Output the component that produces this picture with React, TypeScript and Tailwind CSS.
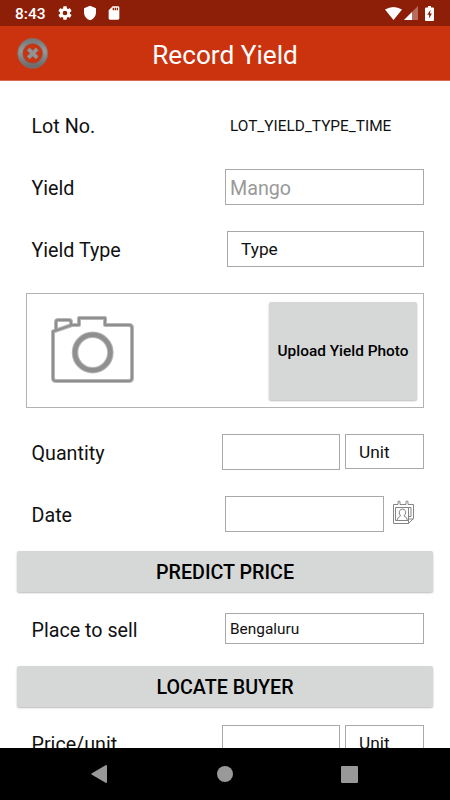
import React from 'react';

const field = 'border border-[#a9a9a9] bg-white flex items-center whitespace-nowrap';
const button =
  'flex items-center justify-center rounded-[2px] bg-[#d6d8d7] pt-[2px] font-medium text-black shadow-[0_1px_2px_rgba(0,0,0,0.28)] whitespace-nowrap';

function StatusBar() {
  return (
    <div className="flex h-[26px] items-center bg-[#8d1f09] pl-[15px] pr-4 text-white">
      <span className="w-[42px] text-[15.5px] font-medium leading-none pt-[3px]">8:43</span>
      <svg className="h-4 w-4" viewBox="0 0 24 24" fill="currentColor">
        <path d="M19.43 12.98c.04-.32.07-.64.07-.98s-.03-.66-.07-.98l2.11-1.65c.19-.15.24-.42.12-.64l-2-3.46c-.12-.22-.39-.3-.61-.22l-2.49 1c-.52-.4-1.08-.73-1.69-.98l-.38-2.65C14.46 2.18 14.25 2 14 2h-4c-.25 0-.46.18-.49.42l-.38 2.65c-.61.25-1.17.59-1.69.98l-2.49-1c-.23-.09-.49 0-.61.22l-2 3.46c-.13.22-.07.49.12.64l2.11 1.65c-.04.32-.07.65-.07.98s.03.66.07.98l-2.11 1.65c-.19.15-.24.42-.12.64l2 3.46c.12.22.39.3.61.22l2.49-1c.52.4 1.08.73 1.69.98l.38 2.65c.03.24.24.42.49.42h4c.25 0 .46-.18.49-.42l.38-2.65c.61-.25 1.17-.59 1.69-.98l2.49 1c.23.09.49 0 .61-.22l2-3.46c.12-.22.07-.49-.12-.64l-2.11-1.65zM12 15.5A3.5 3.5 0 1 1 12 8.5a3.5 3.5 0 0 1 0 7z" />
      </svg>
      <svg className="ml-[9px] h-4 w-4" viewBox="0 0 24 24" fill="currentColor">
        <path d="M12 1 3 5v6c0 5.55 3.84 10.74 9 12 5.16-1.26 9-6.45 9-12V5l-9-4z" />
      </svg>
      <svg className="ml-2 h-4 w-4" viewBox="0 0 24 24" fill="currentColor">
        <path d="M18 2h-8L4 8v12c0 1.1.9 2 2 2h12c1.1 0 2-.9 2-2V4c0-1.1-.9-2-2-2zm-6 6h-2V4h2v4zm3 0h-2V4h2v4zm3 0h-2V4h2v4z" />
      </svg>
      <svg className="ml-auto h-[13px] w-[17px]" viewBox="0 0 17 13" fill="currentColor">
        <path d="M0 2.6Q8.5-2.4 17 2.6L8.5 13z" />
      </svg>
      <svg className="ml-[2px] h-[14px] w-[14px]" viewBox="0 0 14 14" fill="currentColor">
        <path d="M0 14 14 0v14z" opacity=".35" />
        <path d="M0 14 8 6v8z" />
      </svg>
      <svg className="ml-[7px] h-[15px] w-[9px]" viewBox="0 0 9 15">
        <path d="M3 0h3v1.5h2q1 0 1 1V14q0 1-1 1H1q-1 0-1-1V2.5q0-1 1-1h2z" fill="currentColor" />
        <path d="M5.6 3.8 2.2 8.8h1.9v3.8l2.8-5H5z" fill="#8d1f09" />
      </svg>
    </div>
  );
}

function Toolbar() {
  return (
    <div className="grid h-[55px] grid-cols-[66px_1fr_66px] items-center border-b border-[#db6850] bg-[#cb330f]">
      <svg className="ml-[17px] h-8 w-8" viewBox="0 0 32 32">
        <defs>
          <linearGradient id="ring" x1="0" y1="0" x2="0" y2="1">
            <stop offset="0" stopColor="#7b7b7b" />
            <stop offset=".4" stopColor="#989898" />
            <stop offset="1" stopColor="#6c6c6c" />
          </linearGradient>
        </defs>
        <circle cx="15.7" cy="16.4" r="12.5" fill="none" stroke="url(#ring)" strokeWidth="5.2" />
        <circle cx="15.7" cy="16.4" r="14.9" fill="none" stroke="#7e6d68" strokeWidth=".8" />
        <circle cx="15.7" cy="16.4" r="9.9" fill="none" stroke="#70625e" strokeWidth=".6" />
        <path d="m11.3 12 8.800 8.800m0-8.800-8.800 8.800" stroke="#857571" strokeWidth="4.200" />
        <path d="m11.3 12 8.800 8.800m0-8.800-8.800 8.800" stroke="#929292" strokeWidth="3.400" />
      </svg>
      <h1 className="pt-[5px] text-center text-[26.2px] text-white whitespace-nowrap">Record Yield</h1>
    </div>
  );
}

function CameraIcon() {
  return (
    <svg className="mb-[4px] ml-[23px] h-[70px] w-[86px]" viewBox="0 0 86 70" fill="none">
      <g stroke="#b8b8b8" strokeWidth="4" strokeLinejoin="round">
        <path d="M3 17.5 22 11h7V4h26v7h24q3 0 3 3v50q0 3-3 3H6q-3 0-3-3z" />
        <path d="M6 16V8q0-2 2-2h11q2 0 2 2v3" />
        <circle cx="42.7" cy="38.5" r="17.7" strokeWidth="6.5" />
      </g>
      <g stroke="#8f8f8f" strokeWidth="2" strokeLinejoin="round">
        <path d="M3 17.5 22 11h7V4h26v7h24q3 0 3 3v50q0 3-3 3H6q-3 0-3-3z" />
        <path d="M6 16V8q0-2 2-2h11q2 0 2 2v3" />
        <circle cx="42.7" cy="38.5" r="17.7" strokeWidth="4.5" />
      </g>
    </svg>
  );
}

function CalendarIcon() {
  return (
    <svg className="mb-1 ml-[9px] h-[25px] w-[22px]" viewBox="0 0 22 25" fill="none" stroke="#858585">
      <path d="M.5 4.5H5v-3q1-1 2 0v3h6v-3q1-1 2 0v3h5.5v14l-5 5H.5z" />
      <path d="M2.5 7.5h13v13h-13zM15.5 7.5H18v9h-2.500M15.500 23.500V19h5" />
      <path d="M4 20.5q.5-3.500 3.500-4.500-1.500-2-1.200-4.300.5-2.700 3.200-2.700t3.200 2.700q.3 2.300-1.700 4.300 3 1 3.500 4.500" />
    </svg>
  );
}

function Row({ label, className, children }: { label: string; className: string; children: React.ReactNode }) {
  return (
    <div className={`flex shrink-0 items-center justify-between pl-[31.5px] pr-[26px] ${className}`}>
      <span className="pt-1 text-[19.7px] leading-6 whitespace-nowrap">{label}</span>
      <div className="flex">{children}</div>
    </div>
  );
}

function AmountFields() {
  return (
    <>
      <div className={`${field} h-9 w-[118px]`} />
      <div className={`${field} ml-[5px] h-[35px] w-[79px] pl-[13px] pt-[2px] text-[17.3px]`}>Unit</div>
    </>
  );
}

export default function App() {
  return (
    <div className="flex h-[800px] w-[450px] flex-col overflow-hidden bg-white font-['Roboto',sans-serif] text-[#111]">
      <StatusBar />
      <Toolbar />
      <main className="flex min-h-0 flex-1 flex-col overflow-hidden pt-[26px]">
        <Row label="Lot No." className="h-9">
          <span className="w-[194px] pt-1 text-[15.4px] whitespace-nowrap">LOT_YIELD_TYPE_TIME</span>
        </Row>
        <Row label="Yield" className="mt-[26px] h-9">
          <div className={`${field} h-9 w-[199px] pl-1 pt-1 text-[19.7px] text-[#999]`}>Mango</div>
        </Row>
        <Row label="Yield Type" className="mt-[26px] h-9">
          <div className={`${field} -mt-px h-[36px] w-[197px] pl-[13px] pt-[3px] text-[17.3px]`}>Type</div>
        </Row>
        <div className="mx-[26px] mt-[26px] flex h-[115px] shrink-0 items-center justify-between border border-[#b3b3b3] pr-[6px]">
          <CameraIcon />
          <div className={`${button} h-[98px] w-[148px] text-[15.4px]`}>Upload Yield Photo</div>
        </div>
        <Row label="Quantity" className="mt-[26px] h-9">
          <AmountFields />
        </Row>
        <Row label="Date" className="mt-[26px] h-9">
          <div className={`${field} h-9 w-[159px]`} />
          <div className="flex w-10 items-center">
            <CalendarIcon />
          </div>
        </Row>
        <div className={`${button} mx-[17px] mt-[19px] h-[41px] shrink-0 text-[19.7px]`}>PREDICT PRICE</div>
        <Row label="Place to sell" className="mt-[21px] h-[31px]">
          <div className={`${field} h-[31px] w-[199px] pl-1 pt-[3px] text-[15.4px]`}>Bengaluru</div>
        </Row>
        <div className={`${button} mx-[17px] mt-[22px] h-[41px] shrink-0 text-[19.7px]`}>LOCATE BUYER</div>
        <Row label="Price/unit" className="mt-[18px] h-9">
          <AmountFields />
        </Row>
      </main>
      <nav className="flex h-[52px] shrink-0 items-center bg-black pl-[91px] text-[#999]">
        <svg className="h-[18px] w-4" viewBox="0 0 16 18" fill="currentColor">
          <path d="M15 0q1 0 1 1v16q0 1-1 1L.5 9.5q-.5-.5 0-1z" />
        </svg>
        <div className="ml-[110px] h-4 w-4 rounded-full bg-[#999]" />
        <div className="ml-[108px] h-[17px] w-[17px] rounded-[1px] bg-[#999]" />
      </nav>
    </div>
  );
}
